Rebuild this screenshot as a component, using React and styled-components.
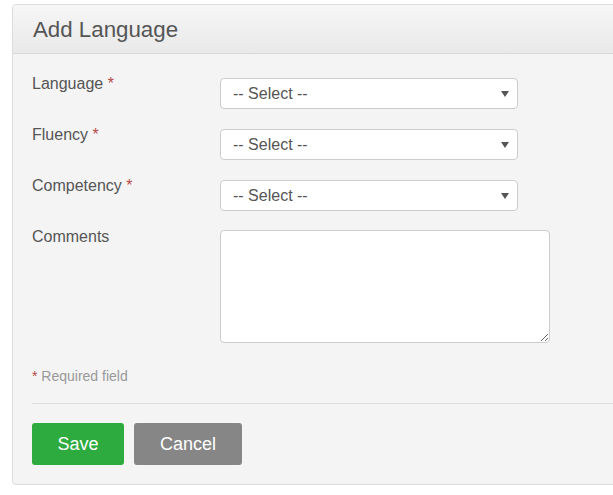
import React from 'react';
import styled, { createGlobalStyle } from 'styled-components';

const GlobalStyle = createGlobalStyle`
  html, body {
    margin: 0;
    padding: 0;
    background: #fff;
    overflow: hidden;
  }
  body {
    font-family: "Liberation Sans", Arial, sans-serif;
  }
`;

const Page = styled.div`
  padding: 4px 0 0 12px;
  width: 700px;
`;

const Panel = styled.div`
  width: 660px;
  border: 1px solid #dcdcdc;
  border-radius: 4px;
  background: #f4f4f4;
  overflow: hidden;
`;

const Header = styled.div`
  height: 48px;
  display: flex;
  align-items: center;
  padding: 0 20px;
  background: linear-gradient(to bottom, #f6f6f6, #e9e9e9);
  border-bottom: 1px solid #d8d8d8;
`;

const Title = styled.h2`
  margin: 0;
  font-size: 22.3px;
  font-weight: normal;
  color: #555;
  position: relative;
  top: 1px;
`;

const Body = styled.div`
  padding: 18px 20px 19px 19px;
`;

const Row = styled.div`
  display: flex;
  align-items: flex-start;
  margin-bottom: 14px;
`;

const Label = styled.label`
  width: 188px;
  flex-shrink: 0;
  font-size: 16px;
  line-height: 24px;
  color: #555;
`;

const Star = styled.span`
  color: #b94a48;
`;

const SelectWrap = styled.div`
  position: relative;
  margin-top: 6px;
  width: 298px;

  &::after {
    content: '';
    position: absolute;
    right: 9px;
    top: 13px;
    border-left: 4px solid transparent;
    border-right: 4px solid transparent;
    border-top: 6px solid #555;
    pointer-events: none;
  }
`;

const Select = styled.select`
  appearance: none;
  -webkit-appearance: none;
  width: 100%;
  height: 31px;
  box-sizing: border-box;
  border: 1px solid #cccccc;
  border-radius: 4px;
  background: #fff;
  padding: 0 12px;
  font-family: "Liberation Sans", Arial, sans-serif;
  font-size: 16px;
  color: #555;
  outline: none;
`;

const TextArea = styled.textarea`
  margin-top: 5px;
  width: 330px;
  height: 113px;
  box-sizing: border-box;
  border: 1px solid #cccccc;
  border-radius: 4px;
  background: #fff;
  font-family: "Liberation Sans", Arial, sans-serif;
  font-size: 15px;
  color: #555;
  display: block;
  outline: none;
`;

const Required = styled.div`
  margin-top: 23px;
  font-size: 14px;
  line-height: 20px;
  color: #999;
`;

const Divider = styled.hr`
  margin: 17px 0 19px;
  border: 0;
  border-top: 1px solid #dcdcdc;
`;

const Actions = styled.div`
  display: flex;
  gap: 10px;
`;

const Button = styled.button`
  width: ${p => (p.$variant === 'save' ? '92px' : '108px')};
  height: 42px;
  padding: 0;
  border: 0;
  border-radius: 3px;
  background: ${p => (p.$variant === 'save' ? '#2dab3f' : '#868686')};
  color: #fff;
  font-family: "Liberation Sans", Arial, sans-serif;
  font-size: 18px;
  cursor: pointer;
`;

const fields = ['Language', 'Fluency', 'Competency'];

export default function App() {
  return (
    <Page>
      <GlobalStyle />
      <Panel>
        <Header>
          <Title>Add Language</Title>
        </Header>
        <Body>
          {fields.map(name => (
            <Row key={name}>
              <Label>
                {name} <Star>*</Star>
              </Label>
              <SelectWrap>
                <Select defaultValue="">
                  <option value="">-- Select --</option>
                </Select>
              </SelectWrap>
            </Row>
          ))}
          <Row>
            <Label>Comments</Label>
            <TextArea />
          </Row>
          <Required>
            <Star>*</Star> Required field
          </Required>
          <Divider />
          <Actions>
            <Button $variant="save">Save</Button>
            <Button $variant="cancel">Cancel</Button>
          </Actions>
        </Body>
      </Panel>
    </Page>
  );
}
